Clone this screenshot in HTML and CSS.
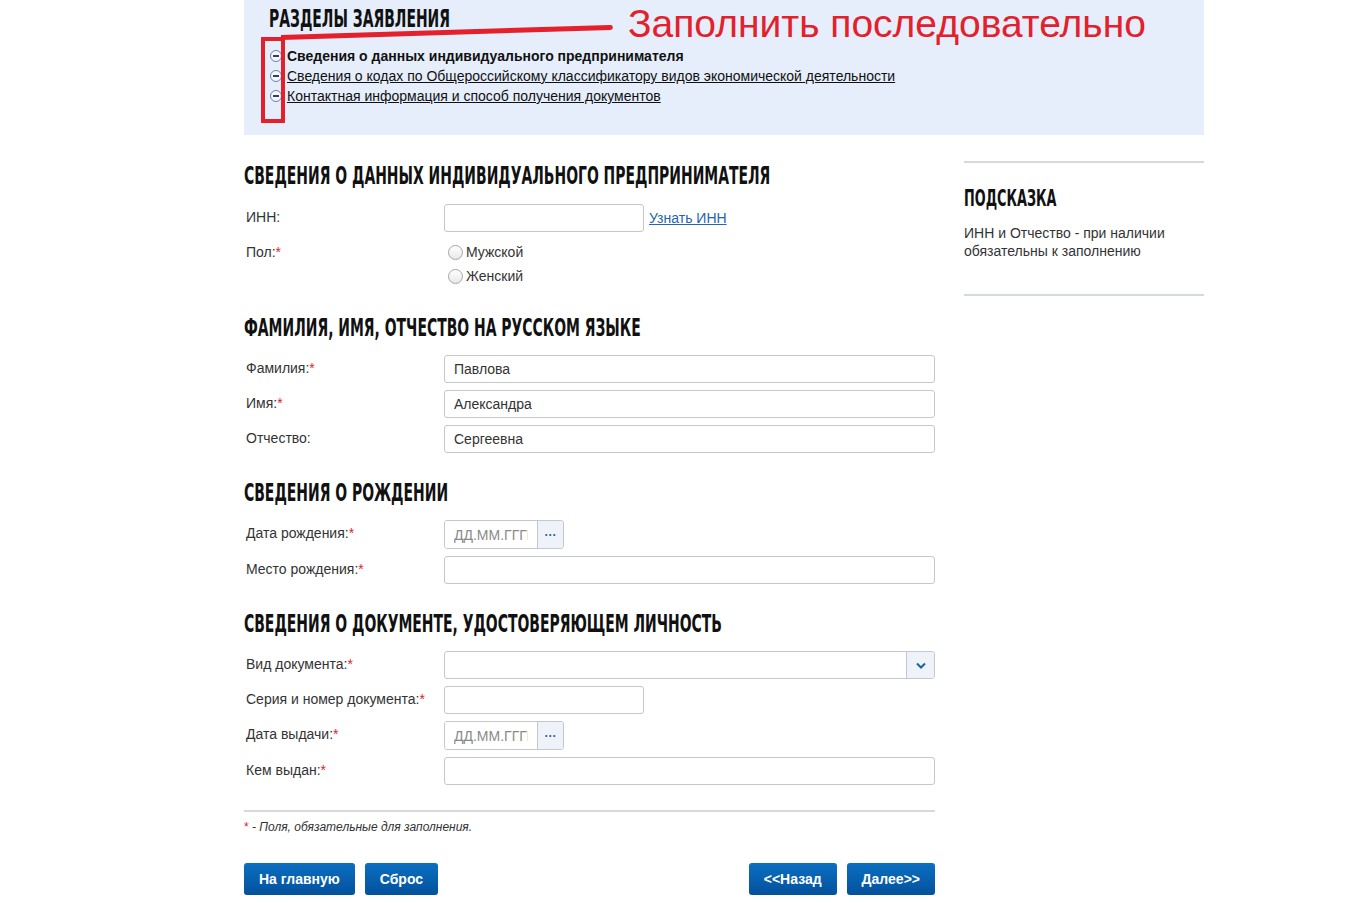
FILE: index.html
```html
<!DOCTYPE html>
<html>
<head>
    <title>Регистрация ИП</title>
    <link rel="stylesheet" href="styles.css">
</head>
<body>
    <div class="page">
        <div class="sections">
            <h2 class="sections-title"><span>Разделы заявления</span></h2>
            <ul class="sections-list">
                <li class="current"><span class="toggle"></span>Сведения о данных индивидуального предпринимателя</li>
                <li><span class="toggle"></span><a href="#">Сведения о кодах по Общероссийскому классификатору видов экономической деятельности</a></li>
                <li><span class="toggle"></span><a href="#">Контактная информация и способ получения документов</a></li>
            </ul>
            <div class="note-box"></div>
            <div class="note-line"></div>
            <div class="note-text">Заполнить последовательно</div>
        </div>

        <div class="content">
            <div class="form">
                <h2 class="heading"><span>Сведения о данных индивидуального предпринимателя</span></h2>
                <div class="row">
                    <label class="label">ИНН:</label>
                    <div class="field">
                        <input class="input short" type="text">
                        <a class="link" href="#">Узнать ИНН</a>
                    </div>
                </div>
                <div class="row radio-row">
                    <label class="label">Пол:<em>*</em></label>
                    <div class="field radios">
                        <label class="radio"><input type="radio" name="sex"> Мужской</label>
                        <label class="radio"><input type="radio" name="sex"> Женский</label>
                    </div>
                </div>

                <h2 class="heading"><span>Фамилия, имя, отчество на русском языке</span></h2>
                <div class="row">
                    <label class="label">Фамилия:<em>*</em></label>
                    <div class="field"><input class="input" type="text" value="Павлова"></div>
                </div>
                <div class="row">
                    <label class="label">Имя:<em>*</em></label>
                    <div class="field"><input class="input" type="text" value="Александра"></div>
                </div>
                <div class="row">
                    <label class="label">Отчество:</label>
                    <div class="field"><input class="input" type="text" value="Сергеевна"></div>
                </div>

                <h2 class="heading"><span>Сведения о рождении</span></h2>
                <div class="row">
                    <label class="label">Дата рождения:<em>*</em></label>
                    <div class="field">
                        <div class="date">
                            <input class="date-input" type="text" placeholder="ДД.ММ.ГГГГ">
                            <button class="date-btn" type="button">···</button>
                        </div>
                    </div>
                </div>
                <div class="row">
                    <label class="label">Место рождения:<em>*</em></label>
                    <div class="field"><input class="input" type="text"></div>
                </div>

                <h2 class="heading"><span>Сведения о документе, удостоверяющем личность</span></h2>
                <div class="row">
                    <label class="label">Вид документа:<em>*</em></label>
                    <div class="field">
                        <div class="select">
                            <span class="select-value"></span>
                            <span class="select-arrow">
                                <svg width="10" height="7" viewBox="0 0 10 7"><path d="M1 1.5 L5 5.5 L9 1.5" fill="none" stroke="#1f5fa8" stroke-width="2"/></svg>
                            </span>
                        </div>
                    </div>
                </div>
                <div class="row">
                    <label class="label">Серия и номер документа:<em>*</em></label>
                    <div class="field"><input class="input short" type="text"></div>
                </div>
                <div class="row">
                    <label class="label">Дата выдачи:<em>*</em></label>
                    <div class="field">
                        <div class="date">
                            <input class="date-input" type="text" placeholder="ДД.ММ.ГГГГ">
                            <button class="date-btn" type="button">···</button>
                        </div>
                    </div>
                </div>
                <div class="row">
                    <label class="label">Кем выдан:<em>*</em></label>
                    <div class="field"><input class="input" type="text"></div>
                </div>

                <div class="footnote"><em>*</em> - Поля, обязательные для заполнения.</div>

                <div class="buttons">
                    <div class="buttons-left">
                        <button class="btn">На главную</button>
                        <button class="btn">Сброс</button>
                    </div>
                    <div class="buttons-right">
                        <button class="btn">&lt;&lt;Назад</button>
                        <button class="btn">Далее&gt;&gt;</button>
                    </div>
                </div>
            </div>

            <aside class="hint">
                <h3 class="hint-title"><span>Подсказка</span></h3>
                <p class="hint-text">ИНН и Отчество - при наличии обязательны к заполнению</p>
            </aside>
        </div>
    </div>
</body>
</html>
```

FILE: styles.css
```css
:root {
    --panel-bg: #e5eefa;
    --text: #333;
    --line: #d6d9dd;
    --border: #c4c7cc;
    --red: #e3202b;
    --blue: #0860ad;
}

body {
    margin: 0;
    background: #fff;
    color: var(--text);
    font-family: "Liberation Sans", Arial, sans-serif;
    font-size: 14px;
}

.page {
    width: 960px;
    margin-left: 244px;
}

/* sections panel */

.sections {
    position: relative;
    height: 135px;
    box-sizing: border-box;
    padding: 4px 0 0 25px;
    background: var(--panel-bg);
}

.sections-title,
.heading,
.hint-title {
    margin: 0;
    font-family: "DejaVu Sans Condensed", "DejaVu Sans", sans-serif;
    font-weight: bold;
    text-transform: uppercase;
    color: #111;
    white-space: nowrap;
}

.sections-title span,
.heading span,
.hint-title span {
    display: inline-block;
    transform: scaleX(0.62);
    transform-origin: left center;
}

.sections-title {
    font-size: 25px;
    line-height: 30px;
}

.sections-list {
    list-style: none;
    margin: 12px 0 0;
    padding: 0;
}

.sections-list li {
    display: flex;
    align-items: center;
    height: 20px;
    color: #111;
}

.sections-list li.current {
    font-weight: bold;
}

.sections-list a {
    color: #111;
}

.toggle {
    position: relative;
    width: 10px;
    height: 10px;
    margin: 0 5px 0 1px;
    border: 1px solid #6a7fb6;
    border-radius: 50%;
    background: #f4f7fd;
}

.toggle::after {
    content: "";
    position: absolute;
    left: 2px;
    right: 2px;
    top: 4px;
    height: 2px;
    background: #2c3f7a;
}

.note-box {
    position: absolute;
    left: 17px;
    top: 37px;
    width: 16px;
    height: 78px;
    border: 4px solid var(--red);
}

.note-line {
    position: absolute;
    left: 37px;
    top: 35px;
    width: 332px;
    height: 5px;
    border-radius: 0 3px 3px 0;
    background: var(--red);
    transform: rotate(-1.75deg);
    transform-origin: left center;
}

.note-text {
    position: absolute;
    left: 384px;
    top: 1px;
    font-family: "Liberation Sans", Arial, sans-serif;
    font-size: 39px;
    line-height: 46px;
    color: var(--red);
    white-space: nowrap;
}

/* main content */

.content {
    display: flex;
    gap: 29px;
}

.form {
    width: 691px;
}

.heading {
    margin: 25px 0 12px;
    font-size: 25px;
    line-height: 30px;
}

.heading:first-child {
    margin: 26px 0 13px;
}

.row {
    display: grid;
    grid-template-columns: 200px 1fr;
    margin-bottom: 7px;
}

.radio-row {
    margin-bottom: 5px;
}

.label {
    padding: 4px 0 0 2px;
    line-height: 18px;
}

.label em,
.footnote em {
    font-style: normal;
    color: var(--red);
}

.field {
    display: flex;
    align-items: center;
}

.input {
    width: 491px;
    height: 28px;
    box-sizing: border-box;
    padding: 0 9px;
    border: 1px solid var(--border);
    border-radius: 3px;
    font-family: inherit;
    font-size: 14px;
    color: #333;
    outline: none;
}

.input.short {
    width: 200px;
}

.link {
    margin-left: 5px;
    color: #2366b3;
}

.radios {
    flex-direction: column;
    align-items: flex-start;
    padding-top: 1px;
}

.radio {
    display: flex;
    align-items: center;
    height: 24px;
    padding-left: 4px;
}

.radio input {
    appearance: none;
    width: 15px;
    height: 15px;
    margin: 0 3px 0 0;
    border: 1px solid #a6a6a6;
    border-radius: 50%;
    background: linear-gradient(#fff, #e8e8e8);
}

.date {
    display: flex;
    height: 27px;
    border: 1px solid var(--border);
    border-radius: 3px;
    overflow: hidden;
}

.date-input {
    width: 93px;
    box-sizing: border-box;
    padding: 0 9px;
    border: 0;
    border-right: 1px solid var(--border);
    font-family: inherit;
    font-size: 14px;
    outline: none;
}

.date-input::placeholder {
    color: #8a8a8a;
}

.date-btn {
    width: 25px;
    padding: 0;
    border: 0;
    background: #eef3f9;
    color: #1f5fa8;
    font-weight: bold;
    font-size: 12px;
    line-height: 1;
}

.select {
    display: flex;
    width: 491px;
    height: 28px;
    box-sizing: border-box;
    border: 1px solid var(--border);
    border-radius: 3px;
    overflow: hidden;
}

.select-value {
    flex: 1;
}

.select-arrow {
    display: flex;
    align-items: center;
    justify-content: center;
    width: 27px;
    border-left: 1px solid var(--border);
    background: #eef3f9;
}

.footnote {
    margin-top: 25px;
    padding-top: 7px;
    border-top: 2px solid var(--line);
    font-size: 12px;
    font-style: italic;
    line-height: 16px;
}

.buttons {
    display: flex;
    justify-content: space-between;
    margin-top: 28px;
}

.buttons-left,
.buttons-right {
    display: flex;
    gap: 10px;
}

.btn {
    height: 32px;
    padding: 0 15px;
    border: 0;
    border-radius: 3px;
    background: linear-gradient(#0b6fc2, #04519b);
    color: #fff;
    font-family: inherit;
    font-size: 14px;
    font-weight: bold;
    cursor: pointer;
}

/* hint */

.hint {
    width: 240px;
    height: 109px;
    margin-top: 26px;
    padding-top: 22px;
    border-top: 2px solid var(--line);
    border-bottom: 2px solid var(--line);
}

.hint-title {
    font-size: 23px;
    line-height: 26px;
}

.hint-text {
    margin: 13px 0 0;
    line-height: 18px;
}
```
